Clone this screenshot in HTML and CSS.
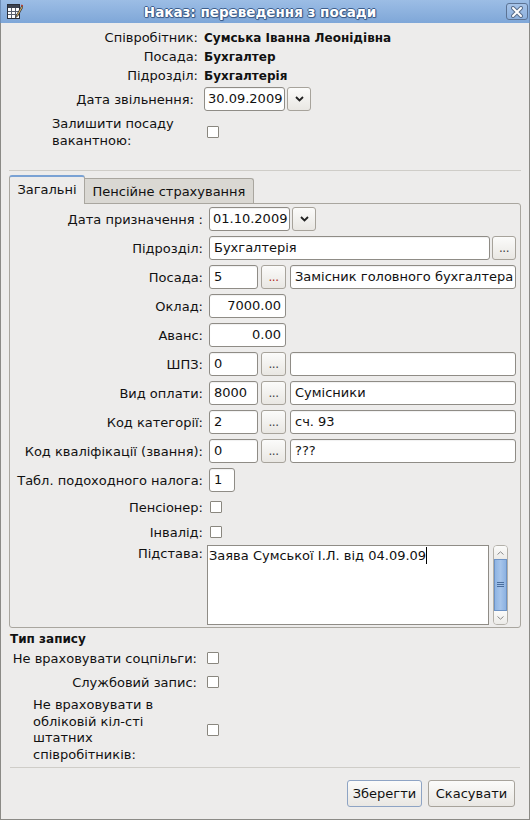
FILE: index.html
```html
<!DOCTYPE html>
<html lang="uk">
<head>
<meta charset="utf-8">
<title>Наказ: переведення з посади</title>
<link rel="stylesheet" href="styles.css">
</head>
<body>
<div class="window">
  <div class="titlebar">
    <svg class="app-icon" width="16" height="17" viewBox="0 0 16 17">
      <rect x="0.5" y="1.5" width="12" height="14" fill="#fff" stroke="#2a2f3a"/>
      <rect x="1" y="2" width="11" height="3" fill="#3b4250"/>
      <path d="M1 8.5H12M1 11.5H12M4.5 5V15M8.5 5V15" stroke="#59606e" stroke-width="1"/>
      <path d="M15 2.5L9.5 12L8.6 14.6L10.8 13L16 4Z" fill="#f0c060" stroke="#2a2f3a" stroke-width="0.8"/>
      <path d="M14.2 2L15.8 3" stroke="#c03a2a" stroke-width="1.4"/>
    </svg>
    <div class="title">Наказ: переведення з посади</div>
    <div class="close">
      <svg width="12" height="12" viewBox="0 0 12 12">
        <path d="M2 2L10 10M10 2L2 10" stroke="#5b6f8c" stroke-width="4" stroke-linecap="round"/>
        <path d="M2 2L10 10M10 2L2 10" stroke="#fff" stroke-width="2" stroke-linecap="round"/>
      </svg>
    </div>
  </div>

  <div class="frame">
    <div class="info">
      <div class="irow"><div class="lbl">Співробітник:</div><div class="val">Сумська Іванна Леонідівна</div></div>
      <div class="irow"><div class="lbl">Посада:</div><div class="val">Бухгалтер</div></div>
      <div class="irow"><div class="lbl">Підрозділ:</div><div class="val">Бухгалтерія</div></div>
      <div class="irow date-row">
        <div class="lbl lbl-date">Дата звільнення:</div>
        <div class="inp w-date">30.09.2009</div>
        <div class="btn dd"><svg width="9" height="6" viewBox="0 0 9 6"><path d="M1 1L4.5 4.5L8 1" fill="none" stroke="#222" stroke-width="1.8"/></svg></div>
      </div>
      <div class="irow vac-row">
        <div class="lbl lbl-wrap">Залишити посаду<br>вакантною:</div>
        <div class="cb cb-top"></div>
      </div>
    </div>

    <div class="sep"></div>

    <div class="tabs">
      <div class="tab active">Загальні</div>
      <div class="tab">Пенсійне страхування</div>
    </div>
    <div class="panel">
      <div class="frow">
        <div class="lbl">Дата призначення :</div>
        <div class="inp w-date">01.10.2009</div>
        <div class="btn dd"><svg width="9" height="6" viewBox="0 0 9 6"><path d="M1 1L4.5 4.5L8 1" fill="none" stroke="#222" stroke-width="1.8"/></svg></div>
      </div>
      <div class="frow">
        <div class="lbl">Підрозділ:</div>
        <div class="inp grow">Бухгалтерія</div>
        <div class="btn dots dots-wide">...</div>
      </div>
      <div class="frow">
        <div class="lbl">Посада:</div>
        <div class="inp w-code">5</div>
        <div class="btn dots red">...</div>
        <div class="inp grow name">Замісник головного бухгалтера</div>
      </div>
      <div class="frow">
        <div class="lbl">Оклад:</div>
        <div class="inp w-num num">7000.00</div>
      </div>
      <div class="frow">
        <div class="lbl">Аванс:</div>
        <div class="inp w-num num">0.00</div>
      </div>
      <div class="frow">
        <div class="lbl">ШПЗ:</div>
        <div class="inp w-code">0</div>
        <div class="btn dots">...</div>
        <div class="inp grow name"></div>
      </div>
      <div class="frow">
        <div class="lbl">Вид оплати:</div>
        <div class="inp w-code">8000</div>
        <div class="btn dots">...</div>
        <div class="inp grow name">Сумісники</div>
      </div>
      <div class="frow">
        <div class="lbl">Код категорії:</div>
        <div class="inp w-code">2</div>
        <div class="btn dots">...</div>
        <div class="inp grow name">сч. 93</div>
      </div>
      <div class="frow">
        <div class="lbl">Код кваліфікації (звання):</div>
        <div class="inp w-code">0</div>
        <div class="btn dots">...</div>
        <div class="inp grow name">???</div>
      </div>
      <div class="frow">
        <div class="lbl">Табл. подоходного налога:</div>
        <div class="inp w-tab">1</div>
      </div>
      <div class="frow crow">
        <div class="lbl">Пенсіонер:</div>
        <div class="cb cb-panel"></div>
      </div>
      <div class="frow crow">
        <div class="lbl">Інвалід:</div>
        <div class="cb cb-panel"></div>
      </div>
      <div class="frow memo-row">
        <div class="lbl lbl-top">Підстава:</div>
        <div class="memo">Заява Сумської І.Л. від 04.09.09<span class="caret"></span></div>
        <div class="sbar">
          <div class="sb-btn"><svg width="7" height="4" viewBox="0 0 7 4"><path d="M0.5 3.5L3.5 0.8L6.5 3.5" fill="none" stroke="#8a8a8a" stroke-width="1"/></svg></div>
          <div class="sb-thumb"><svg width="7" height="6" viewBox="0 0 7 6"><path d="M0 0.5H7M0 2.5H7M0 4.5H7" stroke="#4a6d9c" stroke-width="1"/></svg></div>
          <div class="sb-btn"><svg width="7" height="4" viewBox="0 0 7 4"><path d="M0.5 0.5L3.5 3.2L6.5 0.5" fill="none" stroke="#8a8a8a" stroke-width="1"/></svg></div>
        </div>
      </div>
    </div>

    <div class="section-title">Тип запису</div>
    <div class="bottom">
      <div class="brow first">
        <div class="lbl">Не враховувати соцпільги:</div>
        <div class="cb"></div>
      </div>
      <div class="brow">
        <div class="lbl">Службовий запис:</div>
        <div class="cb"></div>
      </div>
      <div class="brow multi">
        <div class="lbl lbl-wrap">Не враховувати в<br>обліковій кіл-сті<br>штатних<br>співробітників:</div>
        <div class="cb"></div>
      </div>
    </div>

    <div class="sep sep-bottom"></div>

    <div class="buttons">
      <div class="btn pbtn default">Зберегти</div>
      <div class="btn pbtn">Скасувати</div>
    </div>
  </div>
</div>
</body>
</html>
```

FILE: styles.css
```css
* { box-sizing: border-box; }

body {
  margin: 0;
  background: #edeceb;
  font-family: "DejaVu Sans", "Noto Sans", sans-serif;
  font-size: 13px;
  color: #111;
}

.window {
  width: 530px;
  height: 820px;
  display: flex;
  flex-direction: column;
  overflow: hidden;
}

/* Title bar */
.titlebar {
  height: 23px;
  flex: none;
  display: flex;
  align-items: center;
  background: linear-gradient(#9cbde5, #7fa7d8);
  border-left: 1px solid #6f8fb8;
  border-right: 1px solid #6f8fb8;
}

.app-icon {
  flex: none;
  margin-left: 6px;
}

.title {
  flex: 1;
  text-align: center;
  padding-right: 9px;
  font-weight: bold;
  font-size: 13.5px;
  color: #fff;
  text-shadow: 1px 0 0 #3c5e8c, -1px 0 0 #3c5e8c, 0 1px 0 #3c5e8c, 0 -1px 0 #3c5e8c, 1px 1px 1px #3c5e8c;
}

.close {
  flex: none;
  width: 22px;
  height: 17px;
  margin-right: 1px;
  border: 1px solid #5c7394;
  border-radius: 3px;
  background: linear-gradient(#a6c3e8, #8cb0dd);
  display: flex;
  align-items: center;
  justify-content: center;
}

/* Window frame */
.frame {
  flex: 1;
  display: flex;
  flex-direction: column;
  border: 1px solid #8b8a86;
  border-top: 0;
}

/* Top info */
.info {
  padding-top: 5px;
  display: flex;
  flex-direction: column;
}

.irow {
  display: flex;
  align-items: center;
  height: 19px;
}

.irow .lbl {
  width: 197px;
  margin-right: 6px;
  text-align: right;
  flex: none;
  white-space: nowrap;
}

.irow .val {
  font-weight: bold;
  font-size: 12px;
  white-space: nowrap;
}

.date-row {
  height: 24px;
  margin-top: 2px;
}

.irow .lbl-date {
  padding-right: 4px;
}

.vac-row {
  height: 34px;
  margin-top: 4px;
}

.irow .lbl-wrap {
  text-align: left;
  padding-left: 51px;
  line-height: 17px;
}

.cb-top {
  margin-left: 3px;
}

/* Inputs and buttons */
.inp {
  height: 24px;
  border: 1px solid #8f8c86;
  border-radius: 3px;
  background: #fff;
  padding: 0 4px;
  line-height: 22px;
  white-space: nowrap;
  overflow: hidden;
  flex: none;
  box-shadow: inset 0 1px 1px rgba(0, 0, 0, 0.06);
}

.inp.grow {
  flex: 1;
  min-width: 0;
}

.inp.num {
  text-align: right;
}

.w-date { width: 81px; padding: 0 3px; }
.w-code { width: 49px; }
.w-num { width: 77px; }
.w-tab { width: 26px; }

.btn {
  flex: none;
  height: 24px;
  border: 1px solid #a7a39b;
  border-radius: 3px;
  background: linear-gradient(#fbfbfa, #e9e7e3);
  display: flex;
  align-items: center;
  justify-content: center;
}

.dd {
  width: 24px;
  margin-left: 2px;
}

.dots {
  width: 25px;
  margin-left: 3px;
  line-height: 22px;
  font-size: 12px;
  color: #444;
  letter-spacing: -0.5px;
}

.dots-wide {
  width: 24px;
  margin-left: 2px;
}

.dots.red {
  color: #b3301f;
}

.inp.name {
  margin-left: 4px;
}

.cb {
  flex: none;
  width: 12px;
  height: 12px;
  border: 1px solid #8a877f;
  border-radius: 1px;
  background: #fff;
}

/* Separators */
.sep {
  height: 1px;
  margin: 21px 8px 0;
  background: #cfcdc8;
}

.sep-bottom {
  margin: 4px 9px 0;
}

/* Tabs */
.tabs {
  display: flex;
  align-items: flex-end;
  height: 28px;
  margin: 4px 0 0 8px;
}

.tab {
  height: 25px;
  width: 169px;
  background: #dad8d3;
  border: 1px solid #a9a69f;
  border-left: 0;
  border-bottom: 0;
  border-radius: 0 3px 0 0;
  text-align: center;
  line-height: 26px;
  white-space: nowrap;
}

.tab.active {
  position: relative;
  z-index: 1;
  width: 76px;
  height: 29px;
  margin-bottom: -1px;
  background: #edeceb;
  border-left: 1px solid #a9a69f;
  border-top: 2px solid #7aa2d4;
  border-radius: 3px 3px 0 0;
  line-height: 26px;
  padding-bottom: 2px;
}

/* Panel */
.panel {
  margin: 0 8px;
  border: 1px solid #a9a69f;
  border-radius: 0 3px 3px 3px;
  padding: 3px 4px 2px 0;
  display: flex;
  flex-direction: column;
  gap: 5px;
}

.frow {
  display: flex;
  align-items: center;
  height: 24px;
}

.frow .lbl {
  width: 193px;
  margin-right: 6px;
  text-align: right;
  flex: none;
  white-space: nowrap;
}

.crow {
  height: 20px;
}

.cb-panel {
  margin-left: 1px;
}

.memo-row {
  height: 80px;
  align-items: flex-start;
  margin-top: -2px;
}

.frow .lbl-top {
  line-height: 17px;
}

.memo {
  flex: none;
  width: 282px;
  height: 80px;
  margin-left: -2px;
  border: 1px solid #8f8c86;
  background: #fff;
  padding: 1px 1px;
  line-height: 17px;
  white-space: nowrap;
}

.caret {
  display: inline-block;
  width: 1px;
  height: 17px;
  background: #000;
  vertical-align: top;
}

.sbar {
  flex: none;
  width: 15px;
  height: 80px;
  margin-left: 4px;
  border: 1px solid #b3b0a9;
  border-radius: 4px;
  background: #f4f3f1;
  display: flex;
  flex-direction: column;
  overflow: hidden;
}

.sb-btn {
  height: 13px;
  flex: none;
  display: flex;
  align-items: center;
  justify-content: center;
  background: linear-gradient(#fbfbfa, #ecebe8);
}

.sb-thumb {
  flex: 1;
  background: linear-gradient(90deg, #8fb4e3, #a6c4ea 50%, #8db2e1);
  border: 1px solid #6d93c6;
  display: flex;
  align-items: center;
  justify-content: center;
}

/* Bottom section */
.section-title {
  font-weight: bold;
  font-size: 12px;
  line-height: 16px;
  margin-top: 3px;
  padding-left: 9px;
}

.bottom {
  display: flex;
  flex-direction: column;
}

.brow {
  display: flex;
  align-items: center;
  height: 20px;
  margin-top: 4px;
}

.brow.first {
  margin-top: 1px;
}

.brow .lbl {
  width: 196px;
  margin-right: 10px;
  text-align: right;
  flex: none;
  white-space: nowrap;
}

.brow.multi {
  height: 66px;
  margin-top: 5px;
}

.brow .lbl-wrap {
  text-align: left;
  padding-left: 32px;
  line-height: 16.5px;
}

/* Dialog buttons */
.buttons {
  display: flex;
  justify-content: flex-end;
  gap: 6px;
  margin-top: 12px;
  padding-right: 14px;
}

.pbtn {
  height: 27px;
  padding: 0 4px;
  line-height: 25px;
  white-space: nowrap;
}

.pbtn.default {
  width: 75px;
  border-color: #8ea4c4;
}

.pbtn + .pbtn {
  width: 87px;
}
```
